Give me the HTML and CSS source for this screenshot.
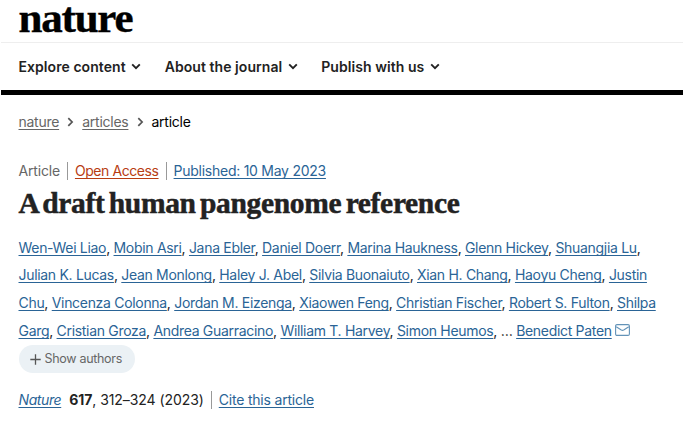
FILE: index.html
```html
<!DOCTYPE html>
<html lang="en">
<head>
<meta charset="utf-8">
<title>A draft human pangenome reference | Nature</title>
<link rel="stylesheet" href="styles.css">
</head>
<body>
<header class="header">
  <div class="brand"><span class="logo">nature</span></div>
  <nav class="menu">
    <span class="item">Explore content <svg class="chev" viewBox="0 0 10 7"><path d="M1.2 1.3 5 5.1 8.8 1.3"/></svg></span>
    <span class="item">About the journal <svg class="chev" viewBox="0 0 10 7"><path d="M1.2 1.3 5 5.1 8.8 1.3"/></svg></span>
    <span class="item">Publish with us <svg class="chev" viewBox="0 0 10 7"><path d="M1.2 1.3 5 5.1 8.8 1.3"/></svg></span>
  </nav>
</header>
<main class="main">
  <nav class="crumbs">
    <a>nature</a><svg class="sep" viewBox="0 0 7 10"><path d="M1.3 1.2 5.1 5 1.3 8.8"/></svg><a>articles</a><svg class="sep" viewBox="0 0 7 10"><path d="M1.3 1.2 5.1 5 1.3 8.8"/></svg><span>article</span>
  </nav>
  <div class="meta"><span class="kind">Article</span><span class="cell"><a class="open">Open Access</a></span><span class="cell"><a class="date">Published: 10 May 2023</a></span></div>
  <h1 class="title">A draft human pangenome reference</h1>
  <div class="authors">
    <div class="line"><a>Wen-Wei Liao</a>, <a>Mobin Asri</a>, <a>Jana Ebler</a>, <a>Daniel Doerr</a>, <a>Marina Haukness</a>, <a>Glenn Hickey</a>, <a>Shuangjia Lu</a>,</div>
    <div class="line"><a>Julian K. Lucas</a>, <a>Jean Monlong</a>, <a>Haley J. Abel</a>, <a>Silvia Buonaiuto</a>, <a>Xian H. Chang</a>, <a>Haoyu Cheng</a>, <a>Justin</a></div>
    <div class="line"><a>Chu</a>, <a>Vincenza Colonna</a>, <a>Jordan M. Eizenga</a>, <a>Xiaowen Feng</a>, <a>Christian Fischer</a>, <a>Robert S. Fulton</a>, <a>Shilpa</a></div>
    <div class="line"><a>Garg</a>, <a>Cristian Groza</a>, <a>Andrea Guarracino</a>, <a>William T. Harvey</a>, <a>Simon Heumos</a>, … <a>Benedict Paten</a><svg class="mail" viewBox="0 0 15 12"><rect x=".6" y=".6" width="13.8" height="10.8" rx="1.4"/><path d="M1.2 2.8 6.3 6Q7.5 6.7 8.7 6L13.8 2.8"/></svg></div>
  </div>
  <span class="show"><svg class="plus" viewBox="0 0 11 11"><path d="M5.5.3v10.4M.3 5.5h10.4"/></svg>Show authors</span>
  <div class="cite"><a class="journal">Nature</a><span class="pages"><b>617</b>, 312–324 (2023)</span><span class="cell"><a>Cite this article</a></span></div>
</main>
</body>
</html>
```
FILE: styles.css
```css
* { box-sizing: border-box; }
body { margin: 0; background: #fff; color: #222; font: 14px/20px Inter, "Liberation Sans", sans-serif; letter-spacing: -.31px; white-space: nowrap; }
svg { fill: none; flex: none; }
a { color: #2a6496; text-decoration: underline; text-decoration-thickness: 1px; text-underline-offset: 2px; text-decoration-skip-ink: none; }
.header { height: 95px; margin-left: 1px; border-bottom: 5px solid #000; }
.brand { height: 43px; padding-left: 17.5px; border-bottom: 1px solid #eee; }
.logo { display: block; font: bold 43px/36px "Liberation Serif", serif; letter-spacing: -1.2px; color: #000; -webkit-text-stroke: .4px #000; }
.menu { display: flex; height: 47px; align-items: center; padding-left: 17.5px; font-weight: 600; gap: 23.5px; letter-spacing: .06px; }
.item { display: flex; align-items: center; gap: 5.5px; }
.chev { width: 10px; height: 7px; stroke: #222; stroke-width: 1.9; }
.main { padding: 16.5px 0 0 18.5px; }
.crumbs { display: flex; align-items: center; height: 20px; color: #000; letter-spacing: -.26px; }
.crumbs a { color: #666; }
.sep { width: 7px; height: 10px; margin: 1px 7.8px 0 8.3px; stroke: #555; stroke-width: 1.7; }
.meta { display: flex; align-items: center; margin-top: 29px; height: 20px; }
.kind { color: #666; letter-spacing: -.18px; }
.cell { display: flex; align-items: center; height: 18px; border-left: 1px solid #999; margin-left: 7px; padding-left: 7px; }
.open { color: #b83c11; letter-spacing: -.42px; }
.date { letter-spacing: -.26px; }
.title { margin: 3px 0 0; height: 38px; font: bold 29.5px/38px "Liberation Serif", serif; letter-spacing: -.33px; word-spacing: -2.7px; -webkit-text-stroke: .5px #222; }
.authors { margin-top: 12px; }
.line { height: 27.9px; line-height: 28px; }
.mail { width: 15px; height: 12px; margin-left: 3px; stroke: #6393b8; stroke-width: 1.1; }
.show { display: flex; align-items: center; width: 116.5px; height: 28px; border-radius: 14px; background: #ebf1f5; color: #666; font-size: 12.5px; letter-spacing: -.3px; padding-left: 11px; gap: 4px; }
.plus { width: 11px; height: 11px; stroke: #555; stroke-width: 1.3; }
.cite { display: flex; align-items: center; height: 20px; margin-top: 16.5px; letter-spacing: -.2px; }
.journal { font-style: italic; letter-spacing: -.4px; }
.pages { margin-left: 8px; letter-spacing: -.07px; }
```
